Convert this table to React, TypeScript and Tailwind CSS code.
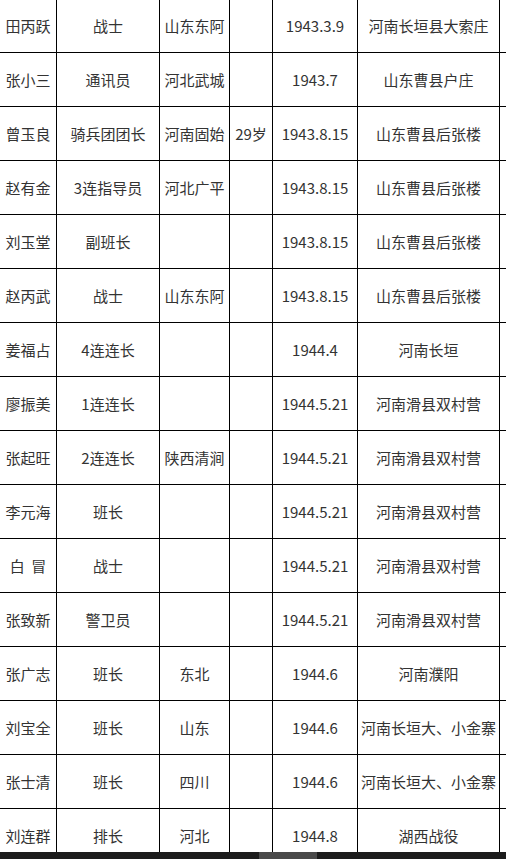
const rows: string[][] = [
  ["田丙跃", "战士", "山东东阿", "", "1943.3.9", "河南长垣县大索庄"],
  ["张小三", "通讯员", "河北武城", "", "1943.7", "山东曹县户庄"],
  ["曾玉良", "骑兵团团长", "河南固始", "29岁", "1943.8.15", "山东曹县后张楼"],
  ["赵有金", "3连指导员", "河北广平", "", "1943.8.15", "山东曹县后张楼"],
  ["刘玉堂", "副班长", "", "", "1943.8.15", "山东曹县后张楼"],
  ["赵丙武", "战士", "山东东阿", "", "1943.8.15", "山东曹县后张楼"],
  ["姜福占", "4连连长", "", "", "1944.4", "河南长垣"],
  ["廖振美", "1连连长", "", "", "1944.5.21", "河南滑县双村营"],
  ["张起旺", "2连连长", "陕西清涧", "", "1944.5.21", "河南滑县双村营"],
  ["李元海", "班长", "", "", "1944.5.21", "河南滑县双村营"],
  ["白  冒", "战士", "", "", "1944.5.21", "河南滑县双村营"],
  ["张致新", "警卫员", "", "", "1944.5.21", "河南滑县双村营"],
  ["张广志", "班长", "东北", "", "1944.6", "河南濮阳"],
  ["刘宝全", "班长", "山东", "", "1944.6", "河南长垣大、小金寨"],
  ["张士清", "班长", "四川", "", "1944.6", "河南长垣大、小金寨"],
  ["刘连群", "排长", "河北", "", "1944.8", "湖西战役"],
];

export default function App() {
  return (
    <div
      className="flex h-[859px] w-[506px] flex-col overflow-hidden bg-white text-[15px] text-[#333]"
      style={{ fontFamily: '"Noto Sans CJK SC", "Noto Sans", sans-serif' }}
    >
      <div className="h-[852px] overflow-hidden">
        <div className="mt-[-1px] flex flex-col">
          {rows.map((row, idx) => (
            <div
              key={idx}
              className="grid h-[54px] grid-cols-[57px_103px_70px_43px_85px_142px] border-b border-black"
            >
              {row.map((cell, j) => (
                <div
                  key={j}
                  className="flex items-center justify-center whitespace-pre border-r border-black px-[1px] leading-none"
                >
                  {cell}
                </div>
              ))}
            </div>
          ))}
        </div>
      </div>
      <div className="flex h-[7px] bg-[#1c1c1c] pl-[259px]">
        <div className="h-full w-[58px] bg-[#4a4a4a]" />
      </div>
    </div>
  );
}
